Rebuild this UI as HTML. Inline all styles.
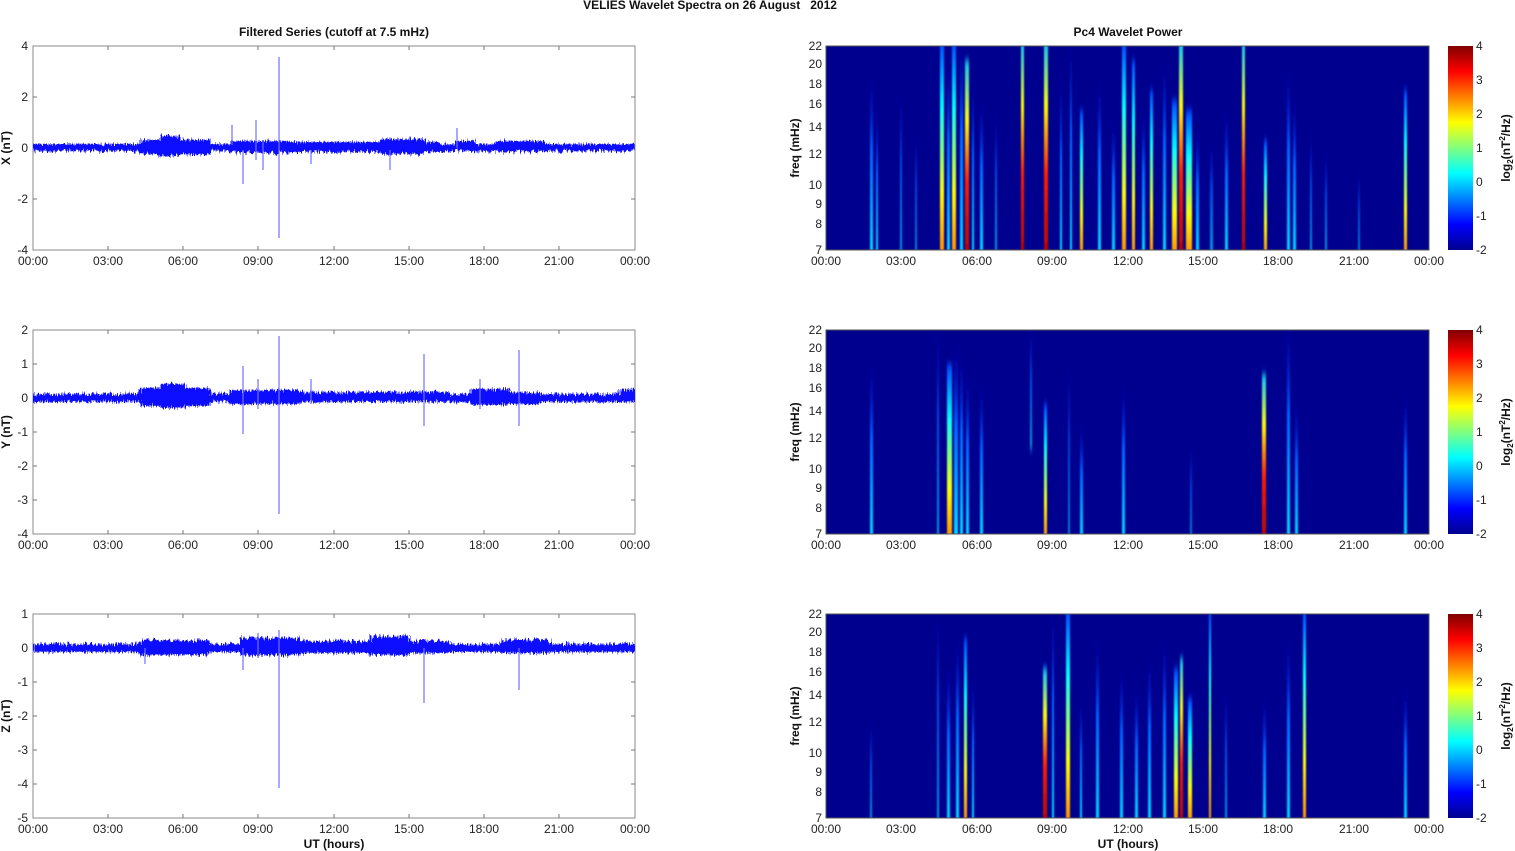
<!DOCTYPE html>
<html><head><meta charset="utf-8"><style>
body{margin:0;background:#fff;}
svg{display:block;font-family:"Liberation Sans",sans-serif;}
.t{font-size:12px;fill:#222}
.b{font-size:12px;font-weight:bold;fill:#111}
</style></head><body>
<svg width="1515" height="851" viewBox="0 0 1515 851">
<defs>
<filter id="bl" x="-5%" y="-5%" width="110%" height="110%"><feGaussianBlur stdDeviation="0.9 4"/></filter>
<filter id="nz" x="0" y="-50%" width="100%" height="200%">
<feTurbulence type="fractalNoise" baseFrequency="0.9 0.05" numOctaves="2" seed="3"/>
<feDisplacementMap in="SourceGraphic" scale="9" xChannelSelector="R" yChannelSelector="G"/>
</filter>
<linearGradient id="jet" x1="0" y1="1" x2="0" y2="0">
<stop offset="0" stop-color="#00008f"/><stop offset="0.125" stop-color="#0000ff"/><stop offset="0.375" stop-color="#00ffff"/><stop offset="0.625" stop-color="#ffff00"/><stop offset="0.875" stop-color="#ff0000"/><stop offset="1" stop-color="#800000"/>
</linearGradient>
<linearGradient id="c" x1="0" y1="0" x2="0" y2="1"><stop offset="0" stop-color="#0000d0" stop-opacity="0"/><stop offset="0.4" stop-color="#0060ff"/><stop offset="1" stop-color="#00e0ff"/></linearGradient>
<linearGradient id="y" x1="0" y1="0" x2="0" y2="1"><stop offset="0" stop-color="#0040ff"/><stop offset="0.3" stop-color="#00ffff"/><stop offset="0.7" stop-color="#ffff00"/><stop offset="1" stop-color="#ff8000"/></linearGradient>
<linearGradient id="r" x1="0" y1="0" x2="0" y2="1"><stop offset="0" stop-color="#00c0ff"/><stop offset="0.3" stop-color="#ffff00"/><stop offset="0.6" stop-color="#ff2000"/><stop offset="1" stop-color="#b00000"/></linearGradient>
<g id="xt">
<text class="t" x="33" text-anchor="middle">00:00</text><text class="t" x="108" text-anchor="middle">03:00</text><text class="t" x="183" text-anchor="middle">06:00</text><text class="t" x="258" text-anchor="middle">09:00</text><text class="t" x="334" text-anchor="middle">12:00</text><text class="t" x="409" text-anchor="middle">15:00</text><text class="t" x="484" text-anchor="middle">18:00</text><text class="t" x="559" text-anchor="middle">21:00</text><text class="t" x="635" text-anchor="middle">00:00</text>
</g>
<g id="xtr">
<text class="t" x="826" text-anchor="middle">00:00</text><text class="t" x="901" text-anchor="middle">03:00</text><text class="t" x="977" text-anchor="middle">06:00</text><text class="t" x="1052" text-anchor="middle">09:00</text><text class="t" x="1128" text-anchor="middle">12:00</text><text class="t" x="1203" text-anchor="middle">15:00</text><text class="t" x="1278" text-anchor="middle">18:00</text><text class="t" x="1354" text-anchor="middle">21:00</text><text class="t" x="1429" text-anchor="middle">00:00</text>
</g>
<g id="ft">
<text class="t" x="822" y="50" text-anchor="end">22</text><text class="t" x="822" y="68" text-anchor="end">20</text><text class="t" x="822" y="88" text-anchor="end">18</text><text class="t" x="822" y="108" text-anchor="end">16</text><text class="t" x="822" y="131" text-anchor="end">14</text><text class="t" x="822" y="158" text-anchor="end">12</text><text class="t" x="822" y="189" text-anchor="end">10</text><text class="t" x="822" y="208" text-anchor="end">9</text><text class="t" x="822" y="228" text-anchor="end">8</text><text class="t" x="822" y="254" text-anchor="end">7</text>
<text class="b" transform="translate(799,148) rotate(-90)" text-anchor="middle">freq (mHz)</text>
<rect x="1448" y="46" width="25" height="204" fill="url(#jet)"/>
<text class="t" x="1476" y="50">4</text><text class="t" x="1476" y="84">3</text><text class="t" x="1476" y="118">2</text><text class="t" x="1476" y="152">1</text><text class="t" x="1476" y="186">0</text><text class="t" x="1476" y="220">-1</text><text class="t" x="1476" y="254">-2</text>
<text class="b" transform="translate(1510,148) rotate(-90)" text-anchor="middle">log<tspan font-size="8" dy="3">2</tspan><tspan dy="-3">(nT</tspan><tspan font-size="8" dy="-5">2</tspan><tspan dy="5">/Hz)</tspan></text>
</g>
<g id="tk" stroke="#777" fill="none">
<path d="M108 46v4M183 46v4M258 46v4M334 46v4M409 46v4M484 46v4M559 46v4M108 250v-4M183 250v-4M258 250v-4M334 250v-4M409 250v-4M484 250v-4M559 250v-4"/>
</g>
</defs>

<text class="b" x="710" y="9" text-anchor="middle">VELIES Wavelet Spectra on 26 August &#160; 2012</text>
<text class="b" x="334" y="36" text-anchor="middle">Filtered Series (cutoff at 7.5 mHz)</text>
<text class="b" x="1128" y="36" text-anchor="middle">Pc4 Wavelet Power</text>

<!-- LEFT ROW 1 -->
<g>
<rect x="33" y="46" width="602" height="204" fill="#fff" stroke="#888"/>
<use href="#tk"/>
<path d="M33 97h4M33 148h4M33 199h4M635 97h-4M635 148h-4M635 199h-4" stroke="#777"/>
<text class="t" x="28" y="50" text-anchor="end">4</text><text class="t" x="28" y="101" text-anchor="end">2</text><text class="t" x="28" y="152" text-anchor="end">0</text><text class="t" x="28" y="203" text-anchor="end">-2</text><text class="t" x="28" y="254" text-anchor="end">-4</text>
<text class="b" transform="translate(10,148) rotate(-90)" text-anchor="middle">X (nT)</text>
<g transform="translate(0,3)"><g fill="#1010ff" filter="url(#nz)">
<rect x="33" y="141" width="602" height="7"/>
<rect x="140" y="137" width="70" height="14"/><rect x="160" y="133" width="20" height="20"/>
<rect x="230" y="138" width="60" height="12"/><rect x="290" y="139" width="150" height="10"/>
<rect x="380" y="136" width="45" height="15"/><rect x="455" y="138" width="20" height="10"/><rect x="495" y="138" width="50" height="11"/>
</g></g>
<path d="M232 125v20M243 150v34M256 120v40M279 57v181M263 140v30M457 128v20M311 150v14M390 150v20" stroke="#7070ff" stroke-width="1.2"/>
<g transform="translate(0,265)"><use href="#xt"/></g>
</g>

<!-- LEFT ROW 2 -->
<g transform="translate(0,284)">
<rect x="33" y="46" width="602" height="204" fill="#fff" stroke="#888"/>
<use href="#tk"/>
<path d="M33 80h4M33 114h4M33 148h4M33 182h4M33 216h4M635 80h-4M635 114h-4M635 148h-4M635 182h-4M635 216h-4" stroke="#777"/>
<text class="t" x="28" y="50" text-anchor="end">2</text><text class="t" x="28" y="84" text-anchor="end">1</text><text class="t" x="28" y="118" text-anchor="end">0</text><text class="t" x="28" y="152" text-anchor="end">-1</text><text class="t" x="28" y="186" text-anchor="end">-2</text><text class="t" x="28" y="220" text-anchor="end">-3</text><text class="t" x="28" y="254" text-anchor="end">-4</text>
<text class="b" transform="translate(10,148) rotate(-90)" text-anchor="middle">Y (nT)</text>
<g transform="translate(0,3)"><g fill="#1010ff" filter="url(#nz)">
<rect x="33" y="107" width="602" height="8"/>
<rect x="140" y="101" width="70" height="18"/><rect x="160" y="97" width="25" height="24"/>
<rect x="230" y="103" width="70" height="14"/><rect x="300" y="105" width="150" height="10"/>
<rect x="470" y="102" width="40" height="16"/><rect x="510" y="105" width="30" height="12"/><rect x="620" y="102" width="15" height="13"/>
</g></g>
<path d="M243 82v68M279 52v178M424 70v72M519 66v76M258 95v30M311 95v25M480 95v30" stroke="#7070ff" stroke-width="1.2"/>
<g transform="translate(0,265)"><use href="#xt"/></g>
</g>

<!-- LEFT ROW 3 -->
<g transform="translate(0,568)">
<rect x="33" y="46" width="602" height="204" fill="#fff" stroke="#888"/>
<use href="#tk"/>
<path d="M33 80h4M33 114h4M33 148h4M33 182h4M33 216h4M635 80h-4M635 114h-4M635 148h-4M635 182h-4M635 216h-4" stroke="#777"/>
<text class="t" x="28" y="50" text-anchor="end">1</text><text class="t" x="28" y="84" text-anchor="end">0</text><text class="t" x="28" y="118" text-anchor="end">-1</text><text class="t" x="28" y="152" text-anchor="end">-2</text><text class="t" x="28" y="186" text-anchor="end">-3</text><text class="t" x="28" y="220" text-anchor="end">-4</text><text class="t" x="28" y="254" text-anchor="end">-5</text>
<text class="b" transform="translate(10,148) rotate(-90)" text-anchor="middle">Z (nT)</text>
<g transform="translate(0,3)"><g fill="#1010ff" filter="url(#nz)">
<rect x="33" y="73" width="602" height="8"/>
<rect x="140" y="69" width="70" height="15"/><rect x="240" y="67" width="60" height="17"/><rect x="300" y="70" width="150" height="12"/><rect x="370" y="65" width="40" height="19"/><rect x="500" y="69" width="50" height="13"/>
</g></g>
<path d="M243 80v22M279 62v158M424 80v55M519 80v42M258 65v25M145 80v16" stroke="#7070ff" stroke-width="1.2"/>
<g transform="translate(0,265)"><use href="#xt"/></g>
<text class="b" x="334" y="280" text-anchor="middle">UT (hours)</text>
</g>

<!-- RIGHT ROW 1 -->
<g>
<rect x="826" y="46" width="603" height="204" fill="#00008f"/>
<svg x="826" y="46" width="603" height="204" viewBox="826 46 603 204"><g filter="url(#bl)">
<rect x="870" y="75" width="3" height="185" fill="url(#c)"/><rect x="876" y="110" width="2" height="150" fill="url(#c)"/>
<rect x="900" y="90" width="2" height="170" fill="url(#c)" opacity=".7"/><rect x="915" y="130" width="2" height="130" fill="url(#c)" opacity=".6"/>
<rect x="940" y="40" width="4" height="220" fill="url(#y)"/><rect x="947" y="60" width="3" height="200" fill="url(#c)"/>
<rect x="952" y="40" width="4" height="220" fill="url(#y)"/><rect x="960" y="40" width="3" height="220" fill="url(#c)"/><rect x="965" y="60" width="4" height="200" fill="url(#r)"/>
<rect x="972" y="80" width="2" height="180" fill="url(#c)"/><rect x="980" y="100" width="3" height="160" fill="url(#c)"/><rect x="995" y="110" width="2" height="150" fill="url(#c)" opacity=".7"/>
<rect x="1021" y="40" width="3" height="220" fill="url(#r)"/><rect x="1044" y="40" width="4" height="220" fill="url(#r)"/><rect x="1060" y="80" width="2" height="180" fill="url(#c)"/>
<rect x="1070" y="40" width="2" height="220" fill="url(#c)"/><rect x="1080" y="110" width="3" height="150" fill="url(#y)"/><rect x="1098" y="80" width="3" height="180" fill="url(#c)"/>
<rect x="1112" y="120" width="3" height="140" fill="url(#c)"/><rect x="1122" y="40" width="4" height="220" fill="url(#y)"/><rect x="1132" y="60" width="3" height="200" fill="url(#y)"/>
<rect x="1142" y="110" width="3" height="150" fill="url(#c)"/><rect x="1150" y="90" width="3" height="170" fill="url(#y)"/><rect x="1163" y="60" width="3" height="200" fill="url(#c)"/>
<rect x="1172" y="100" width="5" height="160" fill="url(#y)"/><rect x="1179" y="40" width="4" height="220" fill="url(#r)"/><rect x="1186" y="110" width="6" height="150" fill="url(#y)"/>
<rect x="1196" y="130" width="3" height="130" fill="url(#c)"/><rect x="1210" y="140" width="3" height="120" fill="url(#c)" opacity=".7"/><rect x="1225" y="110" width="3" height="150" fill="url(#c)"/>
<rect x="1242" y="40" width="3" height="220" fill="url(#r)"/><rect x="1264" y="140" width="3" height="120" fill="url(#y)"/><rect x="1287" y="70" width="3" height="190" fill="url(#c)"/>
<rect x="1293" y="100" width="3" height="160" fill="url(#c)"/><rect x="1310" y="130" width="2" height="130" fill="url(#c)" opacity=".7"/><rect x="1325" y="150" width="2" height="110" fill="url(#c)" opacity=".7"/>
<rect x="1358" y="170" width="2" height="90" fill="url(#c)" opacity=".6"/><rect x="1404" y="90" width="3" height="170" fill="url(#y)"/>
</g></svg>
<path d="M826 46h603v204h-603z" fill="none" stroke="#555"/>
<g transform="translate(0,265)"><use href="#xtr"/></g>
<use href="#ft"/>
</g>

<!-- RIGHT ROW 2 -->
<g transform="translate(0,284)">
<rect x="826" y="46" width="603" height="204" fill="#00008f"/>
<svg x="826" y="46" width="603" height="204" viewBox="826 46 603 204"><g filter="url(#bl)">
<rect x="870" y="80" width="3" height="180" fill="url(#c)"/><rect x="937" y="40" width="2" height="220" fill="url(#c)" opacity=".7"/>
<rect x="947" y="80" width="5" height="180" fill="url(#y)"/><rect x="954" y="60" width="4" height="200" fill="url(#c)"/><rect x="960" y="70" width="3" height="190" fill="url(#c)"/>
<rect x="966" y="90" width="3" height="170" fill="url(#c)"/><rect x="980" y="100" width="3" height="160" fill="url(#c)"/>
<rect x="1030" y="40" width="2" height="126" fill="url(#c)" opacity=".7"/><rect x="1044" y="120" width="3" height="140" fill="url(#y)"/><rect x="1068" y="80" width="2" height="180" fill="url(#c)" opacity=".6"/>
<rect x="1080" y="140" width="3" height="120" fill="url(#c)"/><rect x="1122" y="100" width="3" height="160" fill="url(#c)"/>
<rect x="1190" y="160" width="2" height="100" fill="url(#c)" opacity=".6"/><rect x="1262" y="90" width="4" height="170" fill="url(#r)"/>
<rect x="1287" y="40" width="3" height="220" fill="url(#c)"/><rect x="1295" y="120" width="3" height="140" fill="url(#c)"/><rect x="1404" y="110" width="3" height="150" fill="url(#c)"/>
</g></svg>
<path d="M826 46h603v204h-603z" fill="none" stroke="#555"/>
<g transform="translate(0,265)"><use href="#xtr"/></g>
<use href="#ft"/>
</g>

<!-- RIGHT ROW 3 -->
<g transform="translate(0,568)">
<rect x="826" y="46" width="603" height="204" fill="#00008f"/>
<svg x="826" y="46" width="603" height="204" viewBox="826 46 603 204"><g filter="url(#bl)">
<rect x="870" y="150" width="2" height="110" fill="url(#c)" opacity=".7"/><rect x="937" y="40" width="2" height="220" fill="url(#c)" opacity=".7"/>
<rect x="947" y="100" width="3" height="160" fill="url(#c)"/><rect x="956" y="70" width="3" height="190" fill="url(#c)"/><rect x="964" y="70" width="3" height="190" fill="url(#y)"/><rect x="972" y="110" width="2" height="150" fill="url(#c)"/>
<rect x="1043" y="100" width="4" height="160" fill="url(#r)"/><rect x="1052" y="40" width="2" height="220" fill="url(#c)"/><rect x="1066" y="40" width="4" height="220" fill="url(#y)"/>
<rect x="1080" y="130" width="2" height="130" fill="url(#c)"/><rect x="1096" y="70" width="3" height="190" fill="url(#c)"/><rect x="1120" y="100" width="3" height="160" fill="url(#c)"/>
<rect x="1135" y="120" width="3" height="140" fill="url(#c)"/><rect x="1148" y="90" width="3" height="170" fill="url(#c)"/><rect x="1163" y="70" width="3" height="190" fill="url(#c)"/>
<rect x="1174" y="100" width="4" height="160" fill="url(#y)"/><rect x="1180" y="90" width="3" height="170" fill="url(#r)"/><rect x="1188" y="130" width="4" height="130" fill="url(#y)"/>
<rect x="1209" y="40" width="2" height="220" fill="url(#y)"/><rect x="1225" y="120" width="2" height="140" fill="url(#c)" opacity=".7"/><rect x="1263" y="130" width="3" height="130" fill="url(#c)"/>
<rect x="1287" y="70" width="3" height="190" fill="url(#c)"/><rect x="1303" y="40" width="3" height="220" fill="url(#y)"/><rect x="1404" y="120" width="3" height="140" fill="url(#c)"/>
</g></svg>
<path d="M826 46h603v204h-603z" fill="none" stroke="#555"/>
<g transform="translate(0,265)"><use href="#xtr"/></g>
<use href="#ft"/>
<text class="b" x="1128" y="280" text-anchor="middle">UT (hours)</text>
</g>
</svg>
</body></html>
